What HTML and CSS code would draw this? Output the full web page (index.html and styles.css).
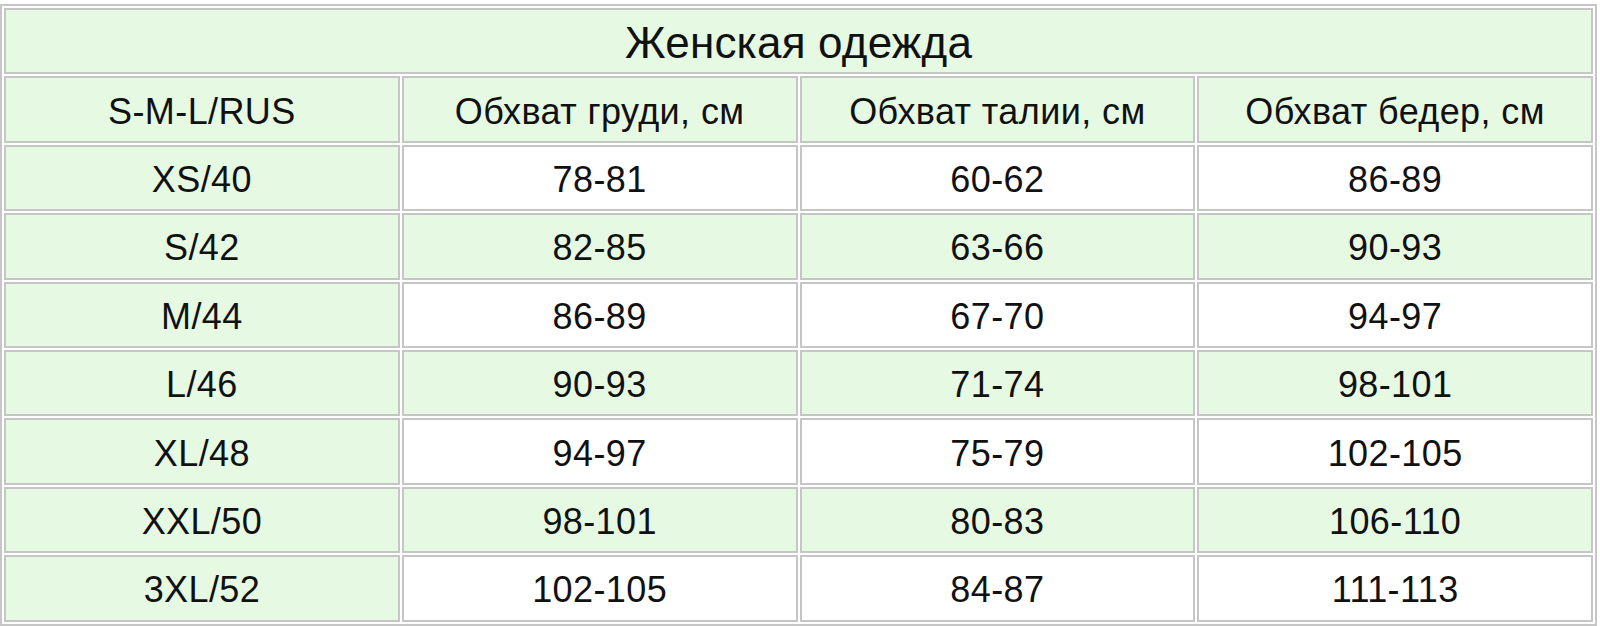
FILE: index.html
```html
<!DOCTYPE html>
<html lang="ru">
<head>
<meta charset="utf-8">
<title>Женская одежда</title>
<link rel="stylesheet" href="styles.css">
</head>
<body>
<table class="size-table">
  <colgroup><col class="col"><col class="col"><col class="col"><col class="col"></colgroup>
  <tr class="title-row"><td colspan="4">Женская одежда</td></tr>
  <tr class="head-row">
    <td>S-M-L/RUS</td><td>Обхват груди, см</td><td>Обхват талии, см</td><td>Обхват бедер, см</td>
  </tr>
  <tr class="row-white"><td class="size">XS/40</td><td>78-81</td><td>60-62</td><td>86-89</td></tr>
  <tr class="row-green"><td class="size">S/42</td><td>82-85</td><td>63-66</td><td>90-93</td></tr>
  <tr class="row-white"><td class="size">M/44</td><td>86-89</td><td>67-70</td><td>94-97</td></tr>
  <tr class="row-green"><td class="size">L/46</td><td>90-93</td><td>71-74</td><td>98-101</td></tr>
  <tr class="row-white"><td class="size">XL/48</td><td>94-97</td><td>75-79</td><td>102-105</td></tr>
  <tr class="row-green"><td class="size">XXL/50</td><td>98-101</td><td>80-83</td><td>106-110</td></tr>
  <tr class="row-white"><td class="size">3XL/52</td><td>102-105</td><td>84-87</td><td>111-113</td></tr>
</table>
</body>
</html>
```
FILE: styles.css
```css
html, body {
  margin: 0;
  padding: 0;
  background: #ffffff;
}
body {
  padding-top: 4px;
}
.size-table {
  width: 1597px;
  border: 2px solid #c6c6c6;
  border-spacing: 2px;
  border-collapse: separate;
  table-layout: fixed;
  font-family: "Liberation Sans", Arial, sans-serif;
  font-size: 36px;
  line-height: 1;
  letter-spacing: 0.4px;
  color: #111111;
}
.size-table .col {
  width: 25%;
}
.size-table tr {
  height: 66.4px;
}
.size-table td {
  border: 2px solid #c6c6c6;
  text-align: center;
  vertical-align: middle;
  padding: 4px 0 0 0;
  background: #e6f9e3;
}
.size-table .title-row td {
  font-size: 44px;
  letter-spacing: 0.2px;
}
.size-table .row-white td {
  background: #ffffff;
}
.size-table .row-white td.size {
  background: #e6f9e3;
}
```
